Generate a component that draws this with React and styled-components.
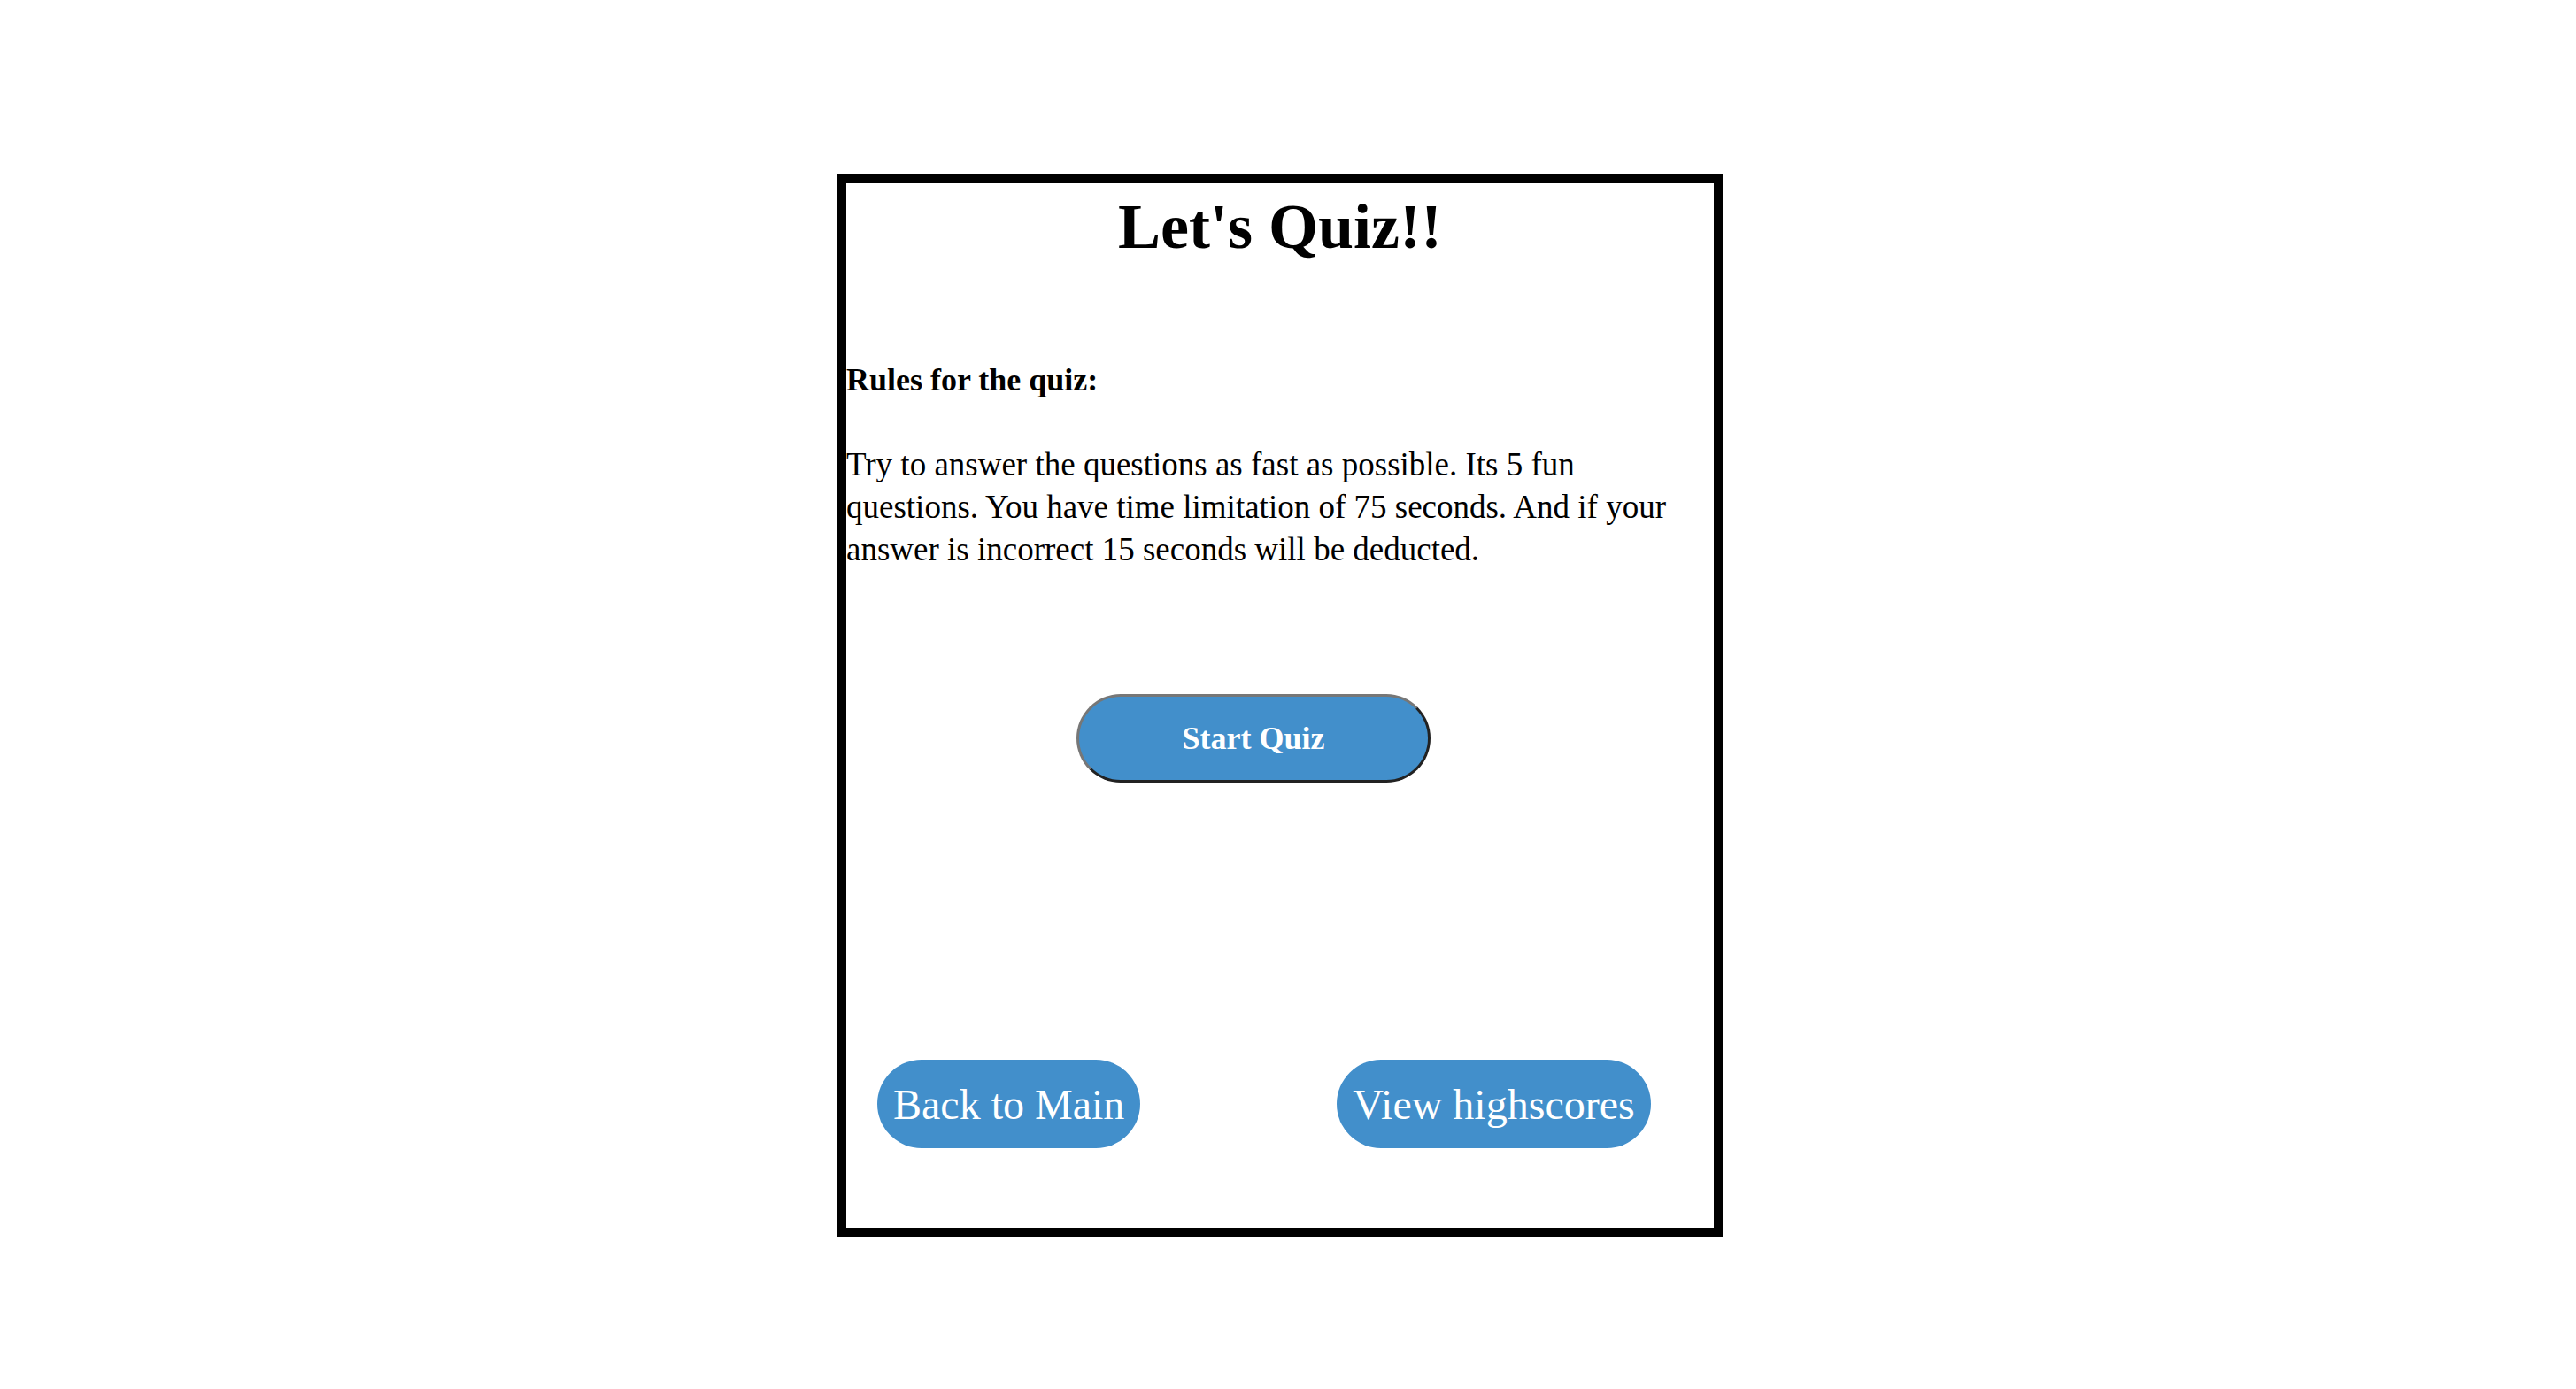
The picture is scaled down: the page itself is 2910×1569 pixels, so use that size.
import React from "react";
import styled, { createGlobalStyle } from "styled-components";

const GlobalStyle = createGlobalStyle`
  body {
    margin: 0;
    background: #ffffff;
    font-family: "Liberation Serif", "Times New Roman", serif;
    color: #000000;
  }
`;

const Page = styled.div`
  width: calc(100% - 18px);
  padding-top: 197px;
`;

const QuizCard = styled.main`
  box-sizing: border-box;
  width: 1000px;
  height: 1200px;
  margin: 0 auto;
  border: 10px solid #000000;
  display: flex;
  flex-direction: column;
`;

const Title = styled.h1`
  margin: 6px 0 0;
  font-size: 72px;
  line-height: 86px;
  font-weight: 700;
  text-align: center;
`;

const RulesHeading = styled.h3`
  margin: 108px 0 0;
  font-size: 36px;
  line-height: 44px;
  font-weight: 700;
`;

const RulesText = styled.p`
  max-width: 940px;
  margin: 50px 0 0;
  font-size: 37px;
  line-height: 48px;
`;

const Button = styled.button`
  box-sizing: border-box;
  height: 100px;
  display: flex;
  align-items: center;
  justify-content: center;
  border-radius: 50px;
  background: #428fcb;
  color: #ffffff;
  font-family: "Liberation Serif", "Times New Roman", serif;
  cursor: pointer;
`;

const StartButton = styled(Button)`
  width: 400px;
  margin: 139px 0 0 260px;
  border: 3px solid;
  border-color: #777777 #222222 #222222 #777777;
  font-size: 36px;
  font-weight: 700;
`;

const NavRow = styled.nav`
  display: flex;
  gap: 222px;
  margin-top: 313px;
  padding-left: 35px;
`;

const NavButton = styled(Button)`
  padding: 0 18px;
  border: none;
  font-size: 48px;
  font-weight: 400;
`;

const App = () => {
  return (
    <>
      <GlobalStyle />
      <Page>
        <QuizCard>
          <Title>Let's Quiz!!</Title>
          <RulesHeading>Rules for the quiz:</RulesHeading>
          <RulesText>
            Try to answer the questions as fast as possible. Its 5 fun
            questions. You have time limitation of 75 seconds. And if your
            answer is incorrect 15 seconds will be deducted.
          </RulesText>
          <StartButton>Start Quiz</StartButton>
          <NavRow>
            <NavButton>Back to Main</NavButton>
            <NavButton>View highscores</NavButton>
          </NavRow>
        </QuizCard>
      </Page>
    </>
  );
};

export default App;
